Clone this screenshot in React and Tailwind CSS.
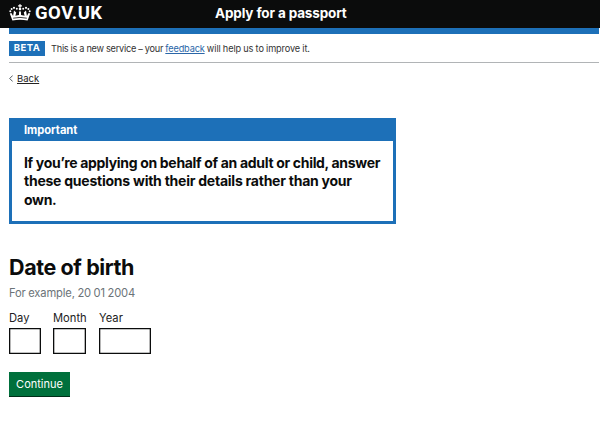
import React from 'react';

function Crown() {
  return (
    <svg className="h-[18px] w-[22px] shrink-0" viewBox="0 0 22 18" fill="white">
      <path d="M10.3 1.200h1.400v1h1.200v1.300h-1.200v1.200h-1.400V3.500H9.100V2.200h1.200Z" />
      <circle cx="11" cy="6" r="1.300" />
      <circle cx="7.800" cy="5.700" r="1" />
      <circle cx="14.200" cy="5.700" r="1" />
      <circle cx="5" cy="4.800" r="1.100" />
      <circle cx="17" cy="4.800" r="1.100" />
      <circle cx="2.600" cy="6" r="1" />
      <circle cx="19.400" cy="6" r="1" />
      <circle cx="1.300" cy="8.200" r="1" />
      <circle cx="20.700" cy="8.200" r="1" />
      <path d="M.8 10.400 2.400 10l1.700 3L5 7.500l2.200 2-.8 3.300 3.600-.8V9.500l1-2 1 2V12l3.600.8-.8-3.300 2.200-2 .9 5.500 1.700-3 1.600.4L18.600 17.500Q11 16.100 3.400 17.500Z" />
      <path d="M4.200 15.200Q11 13.600 17.800 15.200" fill="none" stroke="#0b0c0c" strokeWidth=".8" />
    </svg>
  );
}

function DateField({ label, width }) {
  return (
    <label className="flex flex-col">
      <span className="h-[20px] text-[11.2px] leading-[20px] text-[#222]">{label}</span>
      <input className={'h-[26px] border border-[#0b0c0c] bg-white shadow-[inset_0_0_0_0.3px_#0b0c0c] outline-none ' + width} />
    </label>
  );
}

export default function App() {
  return (
    <div className="h-[425px] w-[600px] overflow-hidden whitespace-nowrap bg-white font-['Inter','Liberation_Sans',sans-serif] text-[#0b0c0c]">
      <header className="flex h-[28px] items-start bg-[#0b0c0c] pl-[9px] pt-[3px] text-white">
        <Crown />
        <span className="ml-[4px] w-[180px] font-['Roboto',sans-serif] text-[18.5px] font-bold leading-[20px] tracking-[0.5px]">GOV.UK</span>
        <span className="text-[13.5px] font-bold leading-[20px] tracking-[-0.14px]">Apply for a passport</span>
      </header>
      <div className="ml-[9px] mr-px">
        <div className="h-[6px] bg-[#1d70b8]" />
        <div className="flex h-[29px] items-center border-b border-[#b1b4b6]">
          <strong className="flex h-[15px] w-[36px] items-center justify-center bg-[#1d70b8] text-[9.5px] font-bold tracking-[0.5px] text-white">BETA</strong>
          <p className="ml-[6px] pt-px text-[9.2px] leading-[14px] tracking-[-0.17px] text-[#333] [word-spacing:-0.2px]">
            <span className="tracking-[-0.24px]">This is a new service – your </span><a className="text-[#2a66a8] underline">feedback</a><span className="tracking-[-0.12px]"> will help us to improve it.</span>
          </p>
        </div>
        <a className="mt-[8px] flex h-[15px] items-center text-[9.5px] leading-[15px] text-[#222]">
          <svg className="mr-[4px] h-[7px] w-[4px]" viewBox="0 0 4 7" fill="none" stroke="#505a5f"><path d="M3.7.5.7 3.5l3 3" /></svg>
          <span className="underline">Back</span>
        </a>
      </div>
      <main className="pl-[9px] pt-[32px]">
        <section className="h-[106px] w-[387px] border-[3px] border-t-0 border-[#1d70b8]">
          <h2 className="h-[23px] bg-[#1d70b8] pl-[12px] text-[11.2px] font-bold leading-[24px] tracking-[-0.05px] text-white">Important</h2>
          <p className="pl-[12px] pt-[12.500px] text-[14px] font-bold leading-[18.5px] tracking-[-0.32px]">
            If you’re applying on behalf of an adult or child, answer<br />
            <span className="tracking-[-0.24px]">these questions with their details rather than your</span><br />own.
          </p>
        </section>
        <h1 className="mt-[28px] h-[30px] text-[21.5px] font-bold leading-[30px] tracking-[-0.4px]">Date of birth</h1>
        <p className="mt-[3px] h-[16px] text-[11.2px] leading-[17px] tracking-[-0.15px] text-[#6b7378] [word-spacing:-0.4px]">For example, 20 01 2004</p>
        <div className="mt-[7px] flex">
          <div className="w-[44px]"><DateField label="Day" width="w-[32px]" /></div>
          <div className="w-[46px]"><DateField label="Month" width="w-[33px]" /></div>
          <DateField label="Year" width="w-[52px]" />
        </div>
        <button className="mt-[18px] flex h-[25px] w-[61px] items-center justify-center border-b border-[#002d18] bg-[#00703c] text-[11px] text-white">Continue</button>
      </main>
    </div>
  );
}
